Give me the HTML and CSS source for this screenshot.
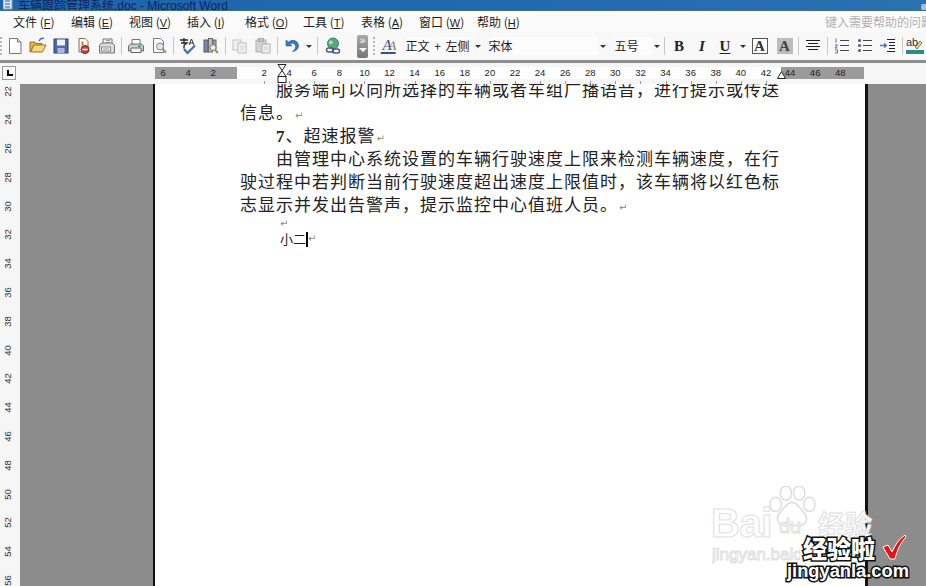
FILE: index.html
```html
<!DOCTYPE html>
<html lang="zh-CN">
<head>
<meta charset="utf-8">
<title>车辆跟踪管理系统.doc - Microsoft Word</title>
<link rel="stylesheet" href="styles.css">
</head>
<body>
<div class="app">
  <header class="titlebar">
    <svg class="title-icon" viewBox="0 0 10 10"><rect x="0" y="-3" width="9" height="12" fill="#dfe8f5" stroke="#8fa4c4"/><path d="M2 1h5M2 4h5M2 7h5" stroke="#2a5aa8"/></svg>
    <span class="title-text">车辆跟踪管理系统.doc - Microsoft Word</span>
    <span class="title-btn"></span>
  </header>

  <nav class="menubar">
    <span class="menu-item">文件 (<u>F</u>)</span>
    <span class="menu-item">编辑 (<u>E</u>)</span>
    <span class="menu-item">视图 (<u>V</u>)</span>
    <span class="menu-item">插入 (<u>I</u>)</span>
    <span class="menu-item">格式 (<u>O</u>)</span>
    <span class="menu-item">工具 (<u>T</u>)</span>
    <span class="menu-item">表格 (<u>A</u>)</span>
    <span class="menu-item">窗口 (<u>W</u>)</span>
    <span class="menu-item">帮助 (<u>H</u>)</span>
    <span class="help-box">键入需要帮助的问题</span>
  </nav>

  <div class="toolbar">
    <span class="grip"></span>
    <span class="tb"><svg viewBox="0 0 18 18"><path d="M3.500 1.500h8l3.500 3.500v11.500h-11.500z" fill="#fff" stroke="#777"/><path d="M11.500 1.500v3.500h3.500" fill="#ddd" stroke="#777"/></svg></span>
    <span class="tb"><svg viewBox="0 0 18 18"><path d="M1 5h5l1 1.500h6v2H5L1 15z" fill="#e2b347" stroke="#9a7420"/><path d="M1.500 15l3.500-7h12l-3.500 7z" fill="#f6d77c" stroke="#9a7420"/><path d="M10 4c1-2 3-3 5-2.500" fill="none" stroke="#3f6fb0" stroke-width="1.500"/></svg></span>
    <span class="tb"><svg viewBox="0 0 18 18"><rect x="2" y="2" width="14" height="14" fill="#4f68ad" stroke="#2c3c74"/><rect x="5" y="2.500" width="8" height="6" fill="#eef1f8"/><rect x="5.500" y="11" width="7" height="5" fill="#aeb8d8"/></svg></span>
    <span class="tb"><svg viewBox="0 0 18 18"><path d="M4 1.500h6l3 3V15H4z" fill="#fff" stroke="#8a6a50"/><path d="M7.500 4.500v4" stroke="#b9872e" stroke-width="2"/><circle cx="10" cy="12.500" r="4" fill="#c9403a" stroke="#7c2420"/><rect x="7.500" y="11.700" width="5" height="1.600" fill="#fff"/></svg></span>
    <span class="tb"><svg viewBox="0 0 18 18"><path d="M5 7V2h9v5" fill="#f2f2f2" stroke="#777"/><path d="M8 3.500h4M8 5.500h4" stroke="#999"/><path d="M1.500 8l2.500-2h10l2.500 2v8h-15z" fill="#dcdcdc" stroke="#777"/><rect x="3.500" y="10" width="9" height="4" fill="#fff" stroke="#888"/><path d="M5 12h6" stroke="#888"/></svg></span>
    <span class="tb-sep"></span>
    <span class="tb"><svg viewBox="0 0 18 18"><path d="M5 8V2.500h8V8" fill="#fff" stroke="#777"/><path d="M1.500 9l2-2h11l2 2v5h-15z" fill="#cfcfcf" stroke="#666"/><path d="M4 11h10v4.500H4z" fill="#f4f4f4" stroke="#666"/><rect x="11" y="8.500" width="3" height="1.500" fill="#3c9a55"/></svg></span>
    <span class="tb"><svg viewBox="0 0 18 18"><path d="M3.500 1.500h7l3 3v11h-10z" fill="#fff" stroke="#777"/><circle cx="10" cy="9.500" r="3.500" fill="#d6e6f6" stroke="#77869a"/><path d="M12.500 12l3.500 3.500" stroke="#b08a3c" stroke-width="2"/></svg></span>
    <span class="tb-sep"></span>
    <span class="tb"><svg viewBox="0 0 18 18"><path d="M1 3h8M5 1v5M2 6h6L5 8.500v3" fill="none" stroke="#222" stroke-width="1.300"/><path d="M10 8l2.500-6L15 8M11 6h3" fill="none" stroke="#333"/><path d="M5 12l3.500 4L16 8.500" fill="none" stroke="#3a6cb4" stroke-width="2"/></svg></span>
    <span class="tb"><svg viewBox="0 0 18 18"><rect x="2" y="3" width="4" height="12" fill="#7d88a6" stroke="#555"/><rect x="6.500" y="1.500" width="4" height="13.500" fill="#c9c29a" stroke="#666"/><rect x="11" y="3" width="3" height="9" fill="#9aa3ba" stroke="#666"/><circle cx="11" cy="10.500" r="3" fill="#e8eef6" stroke="#777"/><path d="M13 13l3 3" stroke="#a88a3a" stroke-width="2"/></svg></span>
    <span class="tb-sep"></span>
    <span class="tb"><svg viewBox="0 0 18 18"><rect x="2" y="3" width="8" height="10" fill="#f0f0f0" stroke="#c4c4c4"/><rect x="7" y="6" width="8" height="10" fill="#f4f4f4" stroke="#bcbcbc"/><path d="M9 9h4M9 11h4M9 13h4" stroke="#d0d0d0"/></svg></span>
    <span class="tb"><svg viewBox="0 0 18 18"><rect x="2" y="3" width="10" height="12" fill="#d4d4d4" stroke="#aeaeae"/><rect x="4.500" y="1.500" width="5" height="3" fill="#c2c2c2" stroke="#a8a8a8"/><rect x="8" y="7" width="8" height="9" fill="#efefef" stroke="#b2b2b2"/><path d="M10 10h4M10 12h4" stroke="#cfcfcf"/></svg></span>
    <span class="tb-sep"></span>
    <span class="tb"><svg viewBox="0 0 18 18"><path d="M3 3v6h6L7 7c3-2 5.500 0 5.500 2.500 0 2-1 3.500-3 5 4-.5 6-3 6-5.500C15.500 4 10 1.500 5.500 5z" fill="#3a74c4" stroke="#24508e" stroke-width=".5"/></svg></span>
    <span class="caret-cell"><i class="caret"></i></span>
    <span class="tb-sep tb-sep-wide"></span>
    <span class="tb"><svg viewBox="0 0 18 18"><circle cx="9" cy="6.500" r="5.500" fill="#58a878" stroke="#3d7a68"/><path d="M5 4c2-1 4 0 4 1.500S6 8 5 6.500z" fill="#a8dcb4"/><rect x="2.500" y="11" width="7" height="4" rx="2" fill="none" stroke="#4a5a7a" stroke-width="1.500"/><rect x="8.500" y="12" width="7" height="4" rx="2" fill="none" stroke="#4a5a7a" stroke-width="1.500"/></svg></span>
    <span class="more-cell"><i class="more-arrows">»</i><i class="caret caret-white"></i></span>
    <span class="grip grip-mid"></span>
    <span class="style-icon">A<em>A</em></span>
    <span class="combo combo-style">正文 + 左侧</span>
    <span class="caret-cell"><i class="caret"></i></span>
    <span class="combo combo-font">宋体</span>
    <span class="caret-cell"><i class="caret"></i></span>
    <span class="combo combo-size">五号</span>
    <span class="caret-cell"><i class="caret"></i></span>
    <span class="tb-sep"></span>
    <span class="tb fmt fmt-b">B</span>
    <span class="tb fmt fmt-i">I</span>
    <span class="tb fmt fmt-u">U</span>
    <span class="caret-cell caret-narrow"><i class="caret"></i></span>
    <span class="fmt-a fmt-a-box">A</span>
    <span class="fmt-a fmt-a-shade">A</span>
    <span class="tb-sep"></span>
    <span class="tb"><svg viewBox="0 0 18 18"><path d="M2 3.500h14M4 6.500h10M2 9.500h14M4 12.500h10" stroke="#222" fill="none"/></svg></span>
    <span class="tb-sep"></span>
    <span class="tb"><svg viewBox="0 0 18 18"><path d="M7 3.500h9M7 8.500h9M7 13.500h9" stroke="#444"/><path d="M3 1.500v4M2 8h2.500L2 11h2.500M2 13h2.500v3H2" stroke="#4a6fb0" fill="none"/></svg></span>
    <span class="tb"><svg viewBox="0 0 18 18"><path d="M7 3.500h9M7 8.500h9M7 13.500h9" stroke="#444"/><circle cx="3.500" cy="3.500" r="1.500" fill="#4a5a80"/><circle cx="3.500" cy="8.500" r="1.500" fill="#4a5a80"/><circle cx="3.500" cy="13.500" r="1.500" fill="#4a5a80"/></svg></span>
    <span class="tb"><svg viewBox="0 0 18 18"><path d="M8 2.500h8M10 5.500h6M10 8.500h6M10 11.500h6M8 14.500h8" stroke="#222"/><path d="M1 8.500h5" stroke="#4a7ac0" stroke-width="1.500"/><path d="M5 5.500l3.500 3-3.500 3z" fill="#4a7ac0"/></svg></span>
    <span class="tb-sep"></span>
    <span class="tb tb-clip"><svg viewBox="0 0 18 18"><path d="M9 10l5-6 2 2-5 6z" fill="#e8d58a" stroke="#777"/><rect y="13" width="18" height="4" fill="#2e8a86"/><text x="0" y="9" class="hl-text">ab</text></svg></span>
  </div>

  <div class="hruler-row">
    <span class="tab-box"><i class="tab-mark"></i></span>
    <div class="hruler">
      <div class="hr-zone hr-gray hr-left"><span>6</span><span>4</span><span>2</span></div>
      <div class="hr-zone hr-white"><span>2</span><span>4</span><span>6</span><span>8</span><span>10</span><span>12</span><span>14</span><span>16</span><span>18</span><span>20</span><span>22</span><span>24</span><span>26</span><span>28</span><span>30</span><span>32</span><span>34</span><span>36</span><span>38</span><span>40</span><span>42</span></div>
      <div class="hr-zone hr-gray hr-right"><span>44</span><span>46</span><span>48</span></div>
    </div>
  </div>

  <div class="workspace">
    <aside class="vruler">
      <span>22</span><span>24</span><span>26</span><span>28</span><span>30</span><span>32</span><span>34</span><span>36</span><span>38</span><span>40</span><span>42</span><span>44</span><span>46</span><span>48</span><span>50</span><span>52</span><span>54</span><span>56</span>
    </aside>
    <main class="desk">
      <article class="page">
        <p class="para para-first">服务端可以向所选择的车辆或者车组广播语音，进行提示或传送</p>
        <p class="para para-cont">信息。<i class="pm">↵</i></p>
        <p class="para"><b class="num">7</b>、超速报警<i class="pm">↵</i></p>
        <p class="para">由管理中心系统设置的车辆行驶速度上限来检测车辆速度，在行</p>
        <p class="para para-cont">驶过程中若判断当前行驶速度超出速度上限值时，该车辆将以红色标</p>
        <p class="para para-cont">志显示并发出告警声，提示监控中心值班人员。<i class="pm">↵</i></p>
        <p class="para-small"><i class="pm">↵</i></p>
        <p class="para-small para-typed">小二<span class="cursor"></span><i class="pm">↵</i></p>
      </article>
    </main>
  </div>
</div>

<svg class="indent-mark" viewBox="0 0 11 20"><path d="M1 .5h8L5 6.500zM5 6.500l4 6H1z" fill="#fff" stroke="#222"/><rect x="1" y="12.500" width="8" height="6" fill="#fff" stroke="#222"/></svg>
<svg class="right-mark" viewBox="0 0 9 8"><path d="M4.500 .5l4 7H.5z" fill="#fff" stroke="#222"/></svg>

<div class="watermark">
  <svg class="wm-paw" viewBox="0 0 48 42"><g fill="#fff" stroke="#dedede" stroke-width="1.500"><ellipse cx="8" cy="18" rx="5.500" ry="7"/><ellipse cx="18" cy="7" rx="5.500" ry="7"/><ellipse cx="31" cy="7" rx="5.500" ry="7"/><ellipse cx="41" cy="18" rx="5.500" ry="7"/><path d="M24 16c5 0 7 5 11 9 6 6 3 14-5 14-3 0-4-1-6-1s-3 1-6 1c-8 0-11-8-5-14 4-4 6-9 11-9z"/></g></svg>
  <span class="wm-bai">Bai</span>
  <span class="wm-du">du</span>
  <span class="wm-cn">经验</span>
  <span class="wm-url">jingyan.baidu.com</span>
</div>

<div class="logo">
  <span class="logo-cn">经验啦</span>
  <svg class="logo-check" viewBox="0 0 26 26"><path d="M2 13l5-2 4 7C14 11 18 5 24 1l1 2c-5 5-9 13-11 22H9z" fill="#e0141e" stroke="#fff"/></svg>
  <span class="logo-url">jingyanla.com</span>
</div>
</body>
</html>
```

FILE: styles.css
```css
* { box-sizing: border-box; }
html, body { margin: 0; height: 100%; overflow: hidden; }
body {
  position: relative;
  font-family: "Noto Sans CJK SC", "Liberation Sans", sans-serif;
  color: #1c1c1c;
  background: #fff;
}
p { margin: 0; }
i, em, b { font-style: normal; font-weight: normal; }

.app { display: flex; flex-direction: column; width: 926px; height: 586px; overflow: hidden; }

/* title bar */
.titlebar {
  flex: 0 0 11px;
  display: flex;
  align-items: flex-end;
  gap: 5px;
  padding-left: 3px;
  overflow: hidden;
  background: linear-gradient(to right, #1d64ab, #2369ad 55%, #2a71b2);
  border-bottom: 1px solid #3d6f86;
}
.title-icon { width: 10px; height: 10px; flex: none; }
.title-text {
  font-family: "Liberation Sans", "Noto Sans CJK SC", sans-serif;
  font-size: 12px;
  line-height: 10px;
  height: 8px;
  color: #10235e;
  white-space: nowrap;
  position: relative;
  top: -1px;
}
.title-btn { margin-left: auto; width: 5px; height: 6px; background: #9ec0de; border-radius: 2px 0 0 2px; }

/* menu */
.menubar {
  flex: 0 0 21px;
  display: flex;
  align-items: center;
  padding-left: 13px;
  background: #fbfbfb;
  font-size: 12px;
  white-space: nowrap;
}
.menu-item { width: 58px; flex: none; }
.menu-item u { font-family: "Liberation Sans", sans-serif; font-size: 11px; }
.help-box { margin-left: auto; width: 101px; overflow: hidden; color: #b0b0b0; flex: none; }

/* toolbar */
.toolbar {
  flex: 0 0 28px;
  display: flex;
  align-items: center;
  background: #f8f8f8;
  white-space: nowrap;
  overflow: hidden;
  font-size: 12px;
}
.grip {
  width: 3.500px;
  flex: none;
  height: 18px;
  background: repeating-linear-gradient(to bottom, #b5b5b5 0 2px, transparent 2px 4px);
  background-size: 2px 100%;
  background-repeat: no-repeat;
}
.tb { width: 23px; flex: none; display: flex; align-items: center; justify-content: center; }
.tb svg { width: 18px; height: 18px; display: block; }
.tb-sep { width: 6px; flex: none; height: 18px; background: linear-gradient(#c8c8c8, #c8c8c8) center / 1px 100% no-repeat; }
.tb-sep-wide { width: 7.500px; }
.caret-cell { width: 10px; flex: none; display: flex; justify-content: center; }
.caret-narrow { width: 12px; }
.caret { width: 0; height: 0; border: 3px solid transparent; border-top: 3px solid #333; border-bottom: 0; display: block; }
.caret-white { border-top-color: #fff; border-left-width: 4px; border-right-width: 4px; border-top-width: 4px; }

.more-cell {
  flex: none;
  width: 11px;
  height: 23px;
  margin-left: 13px;
  border-radius: 2px;
  background: linear-gradient(to bottom, #aaa, #777);
  display: flex;
  flex-direction: column;
  align-items: center;
  gap: 1px;
}
.more-arrows { color: #fff; font-family: "Liberation Sans", sans-serif; font-size: 10px; line-height: 12px; }
.grip-mid { margin-left: 5px; }
.style-icon {
  flex: none;
  margin-left: 5px;
  width: 15px;
  height: 16px;
  overflow: hidden;
  font-family: "Liberation Serif", serif;
  font-size: 15px;
  line-height: 15px;
  color: #3a4f96;
  border-bottom: 2px solid #3a4f96;
  letter-spacing: -5px;
  transform: skewX(-10deg);
}
.style-icon em { color: #8a7a50; font-size: 13px; }
.combo { flex: none; color: #1a1a1a; line-height: 18px; }
.combo-style { width: 67px; margin-left: 9px; word-spacing: 2px; background: #fcfcfc; }
.combo-font { width: 109px; margin-left: 6px; background: #fcfcfc; }
.combo-size { width: 37px; margin-left: 7px; background: #fcfcfc; }
.fmt { font-family: "Liberation Serif", serif; font-size: 15px; font-weight: bold; color: #222; }
.fmt-i { font-style: italic; }
.fmt-u { text-decoration: underline; text-underline-offset: 2px; }
.fmt-a {
  flex: none;
  width: 16px;
  height: 16px;
  margin: 0 3px;
  display: flex;
  align-items: center;
  justify-content: center;
  font-family: "Liberation Serif", serif;
  font-weight: bold;
  font-size: 15px;
}
.fmt-a-box { border: 1px solid #555; background: #fff; color: #333; }
.fmt-a-shade { background: #bcbcbc; color: #444; margin-left: 6px; }
.tb-clip { width: 18px; }
.hl-text { font-family: "Liberation Sans", sans-serif; font-size: 11px; fill: #333; }

/* horizontal ruler */
.hruler-row {
  flex: 0 0 24px;
  display: flex;
  align-items: flex-start;
  background: #f6f6f6;
  border-top: 3px solid #8e8e8e;
  position: relative;
}
.tab-box {
  position: absolute;
  left: 2px;
  top: 3px;
  width: 14px;
  height: 14px;
  border: 1px solid #999;
  background: #fbfbfb;
}
.tab-mark {
  display: block;
  margin: 3px 0 0 4px;
  width: 6px;
  height: 6px;
  border-left: 2px solid #000;
  border-bottom: 2px solid #000;
}
.hruler {
  margin: 4px 0 0 155px;
  display: flex;
  height: 12px;
  font-family: "Liberation Sans", sans-serif;
  font-size: 9.500px;
  line-height: 12px;
  color: #222;
}
.hr-zone { display: flex; flex: none; }
.hr-zone span { width: 25.100px; flex: none; text-align: center; }
.hr-gray { background: #9a9a9a; }
.hr-left { width: 82px; }
.hr-left span:first-child { margin-left: -4.500px; }
.hr-white { width: 544px; background: #fff; padding-left: 14.500px; }
.hr-white span { position: relative; }
.hr-white span::after {
  content: "";
  position: absolute;
  left: 50%;
  top: 14px;
  width: 1px;
  height: 3px;
  background: #999;
}
.hr-right { width: 83px; }
.hr-right span:first-child { margin-left: -3.500px; }

/* workspace */
.workspace { flex: 1; display: flex; min-height: 0; }
.vruler {
  flex: 0 0 20px;
  background: #f6f6f6;
  display: flex;
  flex-direction: column;
  font-family: "Liberation Sans", sans-serif;
  font-size: 9.500px;
  color: #333;
  overflow: hidden;
}
.vruler span {
  flex: 0 0 28.800px;
  width: 16px;
  writing-mode: vertical-rl;
  transform: rotate(180deg);
  text-align: center;
  line-height: 16px;
}
.vruler span:first-child { margin-top: -7.500px; }
.desk { flex: 1; background: #8c8c8c; padding-left: 133px; overflow: hidden; }
.page {
  width: 715px;
  height: 100%;
  background: #fff;
  border-left: 2px solid #111;
  border-right: 3px solid #111;
  overflow: hidden;
  padding: 0 85px;
}
.para {
  font-size: 17px;
  line-height: 23px;
  height: 23px;
  letter-spacing: 1px;
  padding-left: 36px;
  color: #222;
  white-space: nowrap;
}
.para-first { margin-top: -7px; }
.para-cont { padding-left: 0; }
.num { font-family: "Liberation Serif", serif; font-weight: bold; font-size: 17px; }
.pm { font-family: "DejaVu Sans", sans-serif; font-size: 10px; color: #888; letter-spacing: 0; margin-left: 1px; line-height: 0; }
.para-small { font-size: 13px; line-height: 13px; padding-left: 40px; height: 13px; white-space: nowrap; }
.para-small .pm { margin-left: 0; }
.para-typed { height: 20px; line-height: 20px; display: flex; align-items: center; margin-top: 1px; }
.cursor { width: 2px; height: 15px; background: #000; }

/* overlay markers */
.indent-mark { position: absolute; left: 277px; top: 64px; width: 11px; height: 20px; }
.right-mark { position: absolute; left: 777px; top: 71px; width: 9px; height: 8px; }

/* watermark */
.watermark { position: absolute; left: 0; top: 0; width: 926px; height: 586px; pointer-events: none; }
.wm-paw { position: absolute; left: 767px; top: 486px; width: 50px; height: 43px; }
.wm-bai, .wm-du, .wm-cn, .wm-url {
  position: absolute;
  color: #fff;
  -webkit-text-stroke: 1px #e0e0e0;
  white-space: nowrap;
  font-family: "Liberation Sans", sans-serif;
  font-weight: bold;
}
.wm-bai { left: 711px; top: 503px; font-size: 40px; line-height: 40px; letter-spacing: -.5px; }
.wm-du { left: 779px; top: 514px; font-size: 20px; line-height: 24px; font-weight: normal; }
.wm-cn { left: 818px; top: 508px; font-size: 27px; line-height: 32px; font-family: "Noto Sans CJK SC", sans-serif; }
.wm-url { left: 712px; top: 543px; width: 88px; overflow: hidden; font-size: 17px; line-height: 24px; font-weight: normal; }

/* logo */
.logo { position: absolute; left: 0; top: 0; width: 926px; height: 586px; pointer-events: none; }
.logo-cn, .logo-url {
  position: absolute;
  color: #fff;
  -webkit-text-stroke: 3px #111;
  paint-order: stroke fill;
  white-space: nowrap;
}
.logo-cn { left: 803px; top: 534px; font-size: 24px; line-height: 28px; font-family: "Noto Sans CJK SC", sans-serif; font-weight: 900; }
.logo-url { left: 787px; top: 559px; font-size: 18.300px; line-height: 24px; font-family: "Liberation Sans", sans-serif; font-weight: bold; }
.logo-check { position: absolute; left: 881px; top: 534px; width: 26px; height: 26px; }
```
